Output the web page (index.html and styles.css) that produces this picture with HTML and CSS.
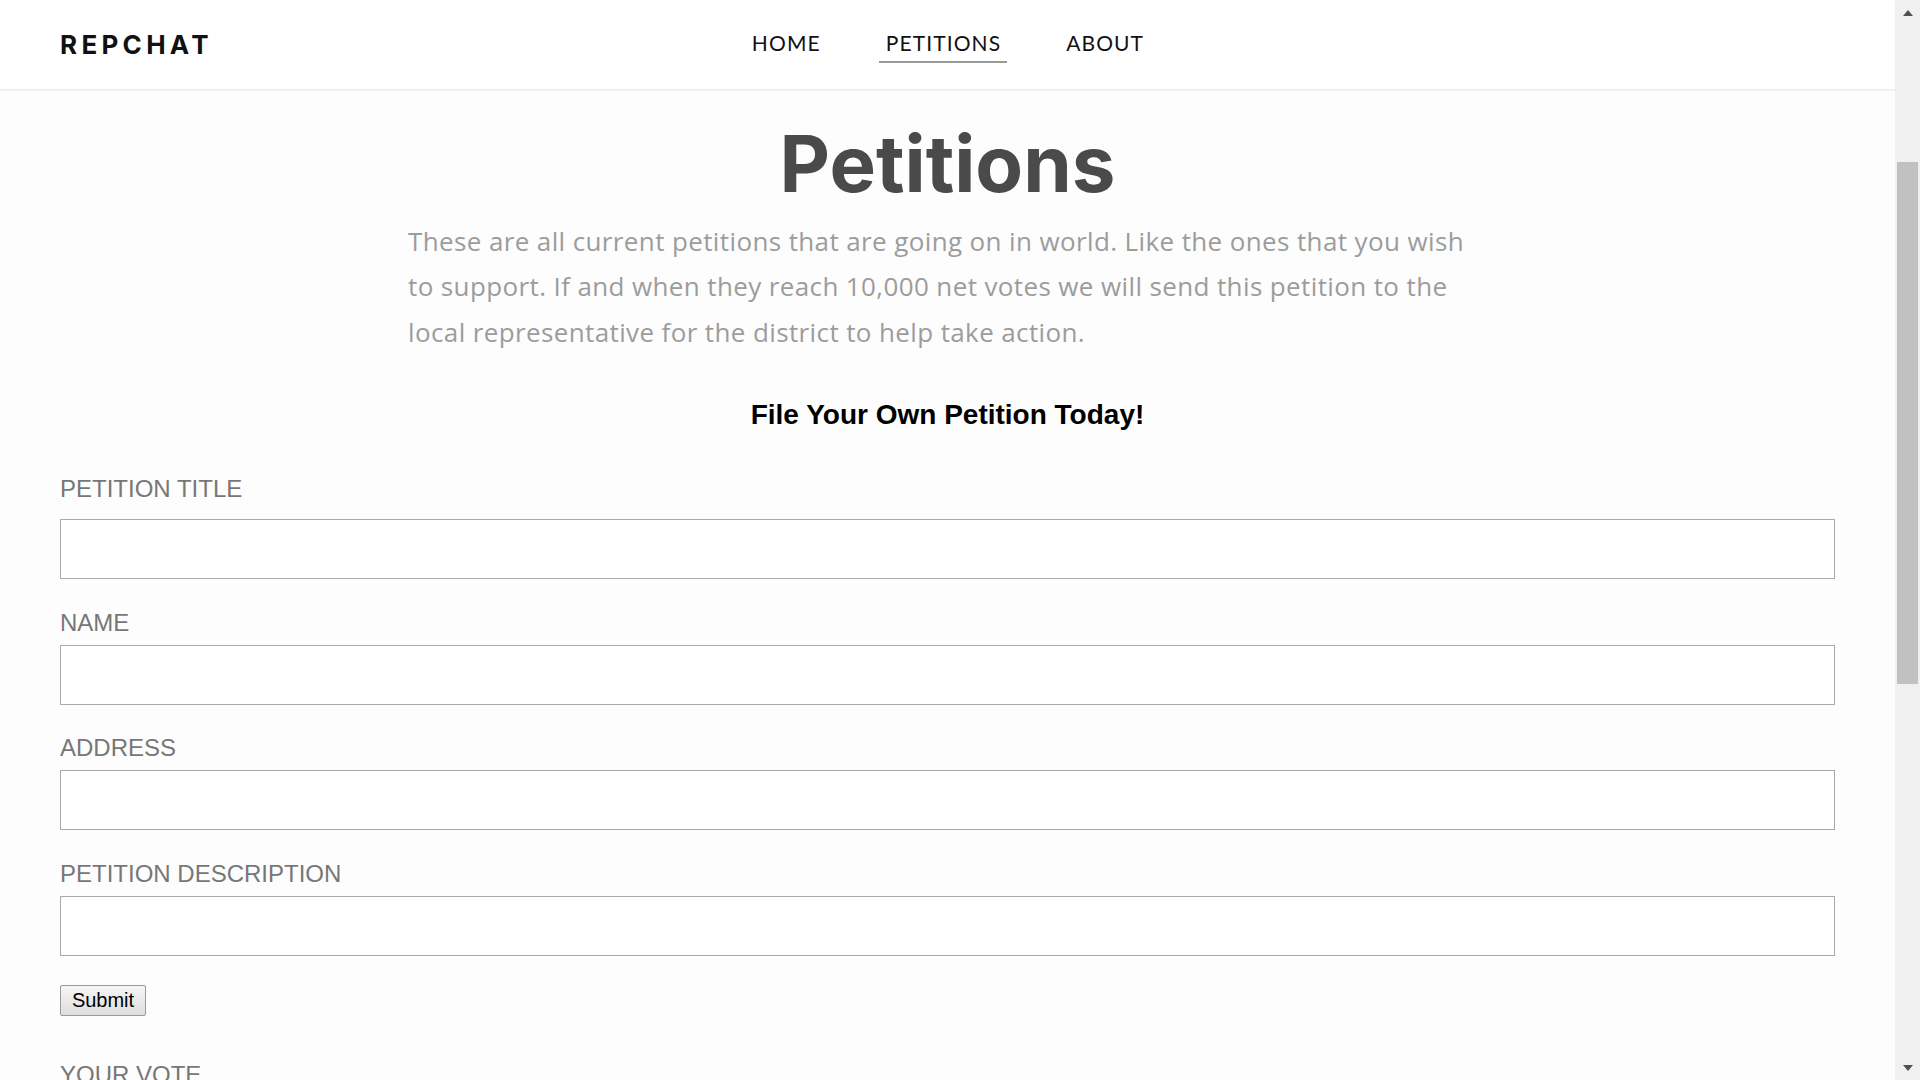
FILE: index.html
```html
<!DOCTYPE html>
<html lang="en">
<head>
<meta charset="utf-8">
<title>RepChat - Petitions</title>
<link rel="stylesheet" href="styles.css">
</head>
<body>
<div class="window">
  <div class="viewport">
    <header class="site-header">
      <div class="brand">REPCHAT</div>
      <nav class="main-nav">
        <a class="nav-link" href="#">HOME</a>
        <a class="nav-link is-active" href="#">PETITIONS</a>
        <a class="nav-link" href="#">ABOUT</a>
      </nav>
      <div class="header-spacer"></div>
    </header>

    <main class="page">
      <section class="intro">
        <h1 class="page-title">Petitions</h1>
        <p class="page-lead">These are all current petitions that are going on in world. Like the ones that you wish to support. If and when they reach 10,000 net votes we will send this petition to the local representative for the district to help take action.</p>
      </section>

      <h2 class="form-heading">File Your Own Petition Today!</h2>

      <form class="petition-form">
        <div class="field field-first">
          <label class="field-label" for="title">PETITION TITLE</label>
          <input class="field-input" id="title" type="text">
        </div>
        <div class="field">
          <label class="field-label" for="name">NAME</label>
          <input class="field-input" id="name" type="text">
        </div>
        <div class="field">
          <label class="field-label" for="address">ADDRESS</label>
          <input class="field-input" id="address" type="text">
        </div>
        <div class="field">
          <label class="field-label" for="desc">PETITION DESCRIPTION</label>
          <input class="field-input" id="desc" type="text">
        </div>
        <button class="submit-btn" type="button">Submit</button>
      </form>

      <section class="vote">
        <label class="field-label" for="vote">YOUR VOTE</label>
        <input class="field-input" id="vote" type="text">
      </section>
    </main>
  </div>

  <div class="scrollbar" aria-hidden="true">
    <div class="sb-btn sb-up"></div>
    <div class="sb-track">
      <div class="sb-thumb" style="margin-top: 137px; height: 522px;"></div>
    </div>
    <div class="sb-btn sb-down"></div>
  </div>
</div>
</body>
</html>
```

FILE: styles.css
```css
body {
  margin: 0;
  background: #fdfdfd;
  font-family: "Liberation Sans", Arial, sans-serif;
  color: #111;
}

.window {
  display: flex;
  height: 100vh;
  overflow: hidden;
}

.viewport {
  flex: 1;
  min-width: 0;
  overflow: hidden;
}

/* window scrollbar */
.scrollbar {
  flex: 0 0 25px;
  display: flex;
  flex-direction: column;
  background: #f0f0f0;
}

.sb-btn {
  height: 25px;
  display: flex;
  align-items: center;
  justify-content: center;
}

.sb-btn::before {
  content: "";
  width: 0;
  height: 0;
  border-left: 5.5px solid transparent;
  border-right: 5.5px solid transparent;
}

.sb-up::before {
  border-bottom: 6px solid #505050;
}

.sb-down::before {
  border-top: 6px solid #505050;
}

.sb-track {
  flex: 1;
}

.sb-thumb {
  margin-left: 2px;
  margin-right: 2px;
  background: #c1c1c1;
}

/* header */
.site-header {
  height: 89px;
  padding: 0 60px;
  background: #fff;
  border-bottom: 2px solid #f0f0f0;
  display: grid;
  grid-template-columns: 1fr auto 1fr;
  align-items: center;
}

.brand {
  font-family: Inter, "Liberation Sans", sans-serif;
  font-weight: 700;
  font-size: 26px;
  line-height: 26px;
  letter-spacing: 4.3px;
  color: #111;
}

.main-nav {
  display: flex;
  gap: 52px;
}

.nav-link {
  font-family: Lato, "Liberation Sans", sans-serif;
  font-size: 21px;
  line-height: 24px;
  letter-spacing: 1.1px;
  color: #111;
  text-decoration: none;
  padding: 4px 6px 6px 7px;
  border-bottom: 2px solid transparent;
}

.nav-link.is-active {
  border-bottom-color: #999;
}

/* content */
.page {
  padding: 25.6px 60px 0;
}

.intro {
  text-align: center;
}

.page-title {
  margin: 0;
  font-family: Inter, "Liberation Sans", sans-serif;
  font-weight: 700;
  font-size: 78px;
  line-height: 94px;
  color: #4a4a4a;
}

.page-lead {
  max-width: 1079px;
  margin: 8.4px auto 0;
  text-align: left;
  font-family: "Open Sans", sans-serif;
  font-size: 26px;
  line-height: 45.3px;
  letter-spacing: 0.38px;
  color: #9c9c9c;
}

.form-heading {
  margin: 44.4px 0 0;
  text-align: center;
  font-family: "Liberation Sans", Arial, sans-serif;
  font-weight: 700;
  font-size: 28px;
  line-height: 32px;
  color: #000;
}

.petition-form {
  margin-top: 44px;
}

.field {
  margin-bottom: 29.5px;
}

.field-label {
  display: block;
  margin-bottom: 8px;
  font-size: 24px;
  line-height: 28px;
  color: #777;
}

.field-first .field-label {
  margin-bottom: 16px;
}

.field-input {
  display: block;
  box-sizing: border-box;
  width: 100%;
  height: 60px;
  margin: 0;
  border: 1px solid #a9a9a9;
  border-radius: 0;
  background: #fff;
  font: inherit;
}

.submit-btn {
  display: block;
  box-sizing: border-box;
  width: 86px;
  height: 31px;
  margin-top: 0.5px;
  padding: 0;
  font-family: "Liberation Sans", Arial, sans-serif;
  font-size: 20px;
  color: #000;
  border: 1px solid #9a9a9a;
  border-radius: 2px;
  background: linear-gradient(#f6f6f6, #dedede);
}

.vote {
  margin-top: 45px;
}
```
